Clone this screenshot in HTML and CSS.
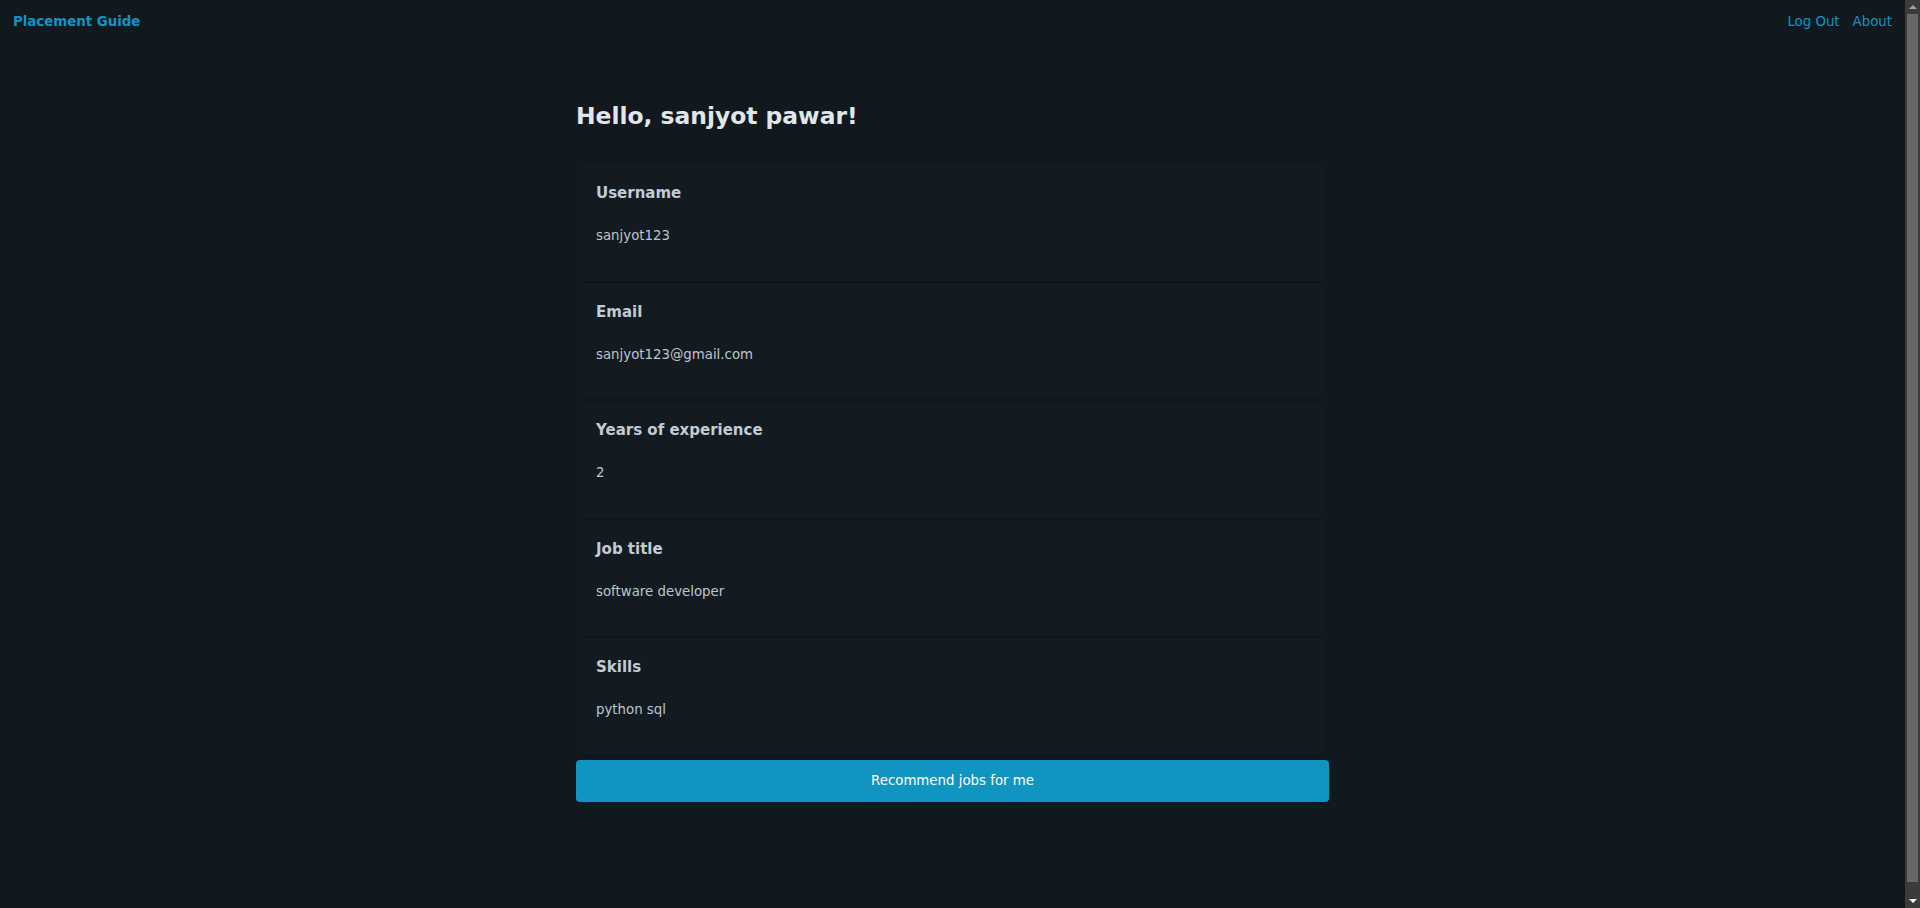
FILE: index.html
```html
<!DOCTYPE html>
<html lang="en">
<head>
<meta charset="utf-8">
<title>Placement Guide</title>
<link rel="stylesheet" href="styles.css">
</head>
<body>
<nav class="topnav">
  <a class="brand" href="#">Placement Guide</a>
  <div class="navlinks">
    <a href="#">Log Out</a>
    <a href="#">About</a>
  </div>
</nav>
<main class="container">
  <h1 class="greeting">Hello, sanjyot pawar!</h1>
  <section class="cards">
    <article class="card">
      <h4 class="card-label">Username</h4>
      <p class="card-value">sanjyot123</p>
    </article>
    <article class="card">
      <h4 class="card-label">Email</h4>
      <p class="card-value">sanjyot123@gmail.com</p>
    </article>
    <article class="card">
      <h4 class="card-label">Years of experience</h4>
      <p class="card-value">2</p>
    </article>
    <article class="card">
      <h4 class="card-label">Job title</h4>
      <p class="card-value">software developer</p>
    </article>
    <article class="card">
      <h4 class="card-label">Skills</h4>
      <p class="card-value">python sql</p>
    </article>
  </section>
  <button class="primary-btn" type="button">Recommend jobs for me</button>
</main>
<div class="fake-scrollbar" aria-hidden="true">
  <div class="sb-arrow sb-up"></div>
  <div class="sb-track"><div class="sb-thumb"></div></div>
  <div class="sb-arrow sb-down"></div>
</div>
</body>
</html>
```
FILE: styles.css
```css
:root {
  color-scheme: dark;
}
* {
  box-sizing: border-box;
}
html, body {
  margin: 0;
  padding: 0;
}
html {
  scrollbar-width: none;
}
html::-webkit-scrollbar {
  display: none;
}
body {
  margin-right: 15px;
  background: #11191f;
  color: #bbc6ce;
  font-family: "DejaVu Sans", "Noto Sans", sans-serif;
  font-size: 13.33px;
  line-height: 1.2;
}
a {
  color: #1095c1;
  text-decoration: none;
}
.topnav {
  height: 44px;
  padding: 0 13px;
  display: flex;
  align-items: center;
  justify-content: space-between;
}
.brand {
  font-weight: bold;
  font-size: 13.33px;
}
.navlinks {
  display: flex;
  gap: 13px;
  font-size: 13.33px;
}
.container {
  width: 753px;
  margin: 0 auto;
  padding: 59px 0 100px;
}
.greeting {
  margin: 0 0 34px;
  font-size: 23.4px;
  line-height: 27px;
  color: #e0e6ea;
  font-weight: bold;
}
.cards {
  display: flex;
  flex-direction: column;
  gap: 2px;
}
.card {
  margin: 0 6px;
  padding: 20px 14px 37px;
  background: #121b22;
  box-shadow: 0 2px 1px #0e151b;
}
.card-label {
  margin: 0;
  font-size: 15px;
  line-height: 18px;
  color: #c3ccd3;
  font-weight: bold;
}
.card-value {
  margin: 26px 0 0;
  font-size: 13.33px;
  line-height: 15.6px;
  color: #bbc6ce;
}
.primary-btn {
  display: block;
  width: 100%;
  height: 42px;
  margin-top: 5px;
  border: 0;
  border-radius: 4px;
  background: #1095c1;
  color: #ffffff;
  font-family: inherit;
  font-size: 13.33px;
  cursor: pointer;
}
.fake-scrollbar {
  position: fixed;
  top: 0;
  right: 0;
  width: 15px;
  height: 100vh;
  background: #3b3b3b;
  display: flex;
  flex-direction: column;
}
.sb-arrow {
  height: 14px;
  flex: none;
  position: relative;
}
.sb-arrow::after {
  content: "";
  position: absolute;
  left: 4px;
  width: 0;
  height: 0;
  border-left: 4px solid transparent;
  border-right: 4px solid transparent;
}
.sb-up::after {
  top: 5px;
  border-bottom: 4px solid #a3a3a3;
}
.sb-down::after {
  top: 5px;
  border-top: 4px solid #ffffff;
}
.sb-track {
  flex: 1;
  padding: 0 2px 12px;
}
.sb-thumb {
  height: 100%;
  background: #686868;
}
```
